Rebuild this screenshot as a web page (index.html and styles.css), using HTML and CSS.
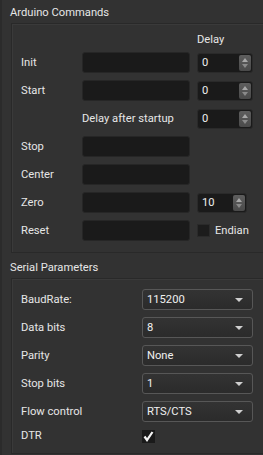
FILE: index.html
```html
<!DOCTYPE html>
<html>
<head>
<meta charset="utf-8">
<link rel="stylesheet" href="styles.css">
</head>
<body>
<div class="page">
  <div class="group-title">Arduino Commands</div>
  <div class="frame">
    <div class="cmd-grid">
      <div></div><div></div><div class="hdr">Delay</div>
      <div class="lbl">Init</div><div class="edit"></div><div class="spin"><span class="val">0</span><span class="btns"><i class="up"></i><i class="dn"></i></span></div>
      <div class="lbl">Start</div><div class="edit"></div><div class="spin"><span class="val">0</span><span class="btns"><i class="up"></i><i class="dn"></i></span></div>
      <div></div><div class="lbl">Delay after startup</div><div class="spin"><span class="val">0</span><span class="btns"><i class="up"></i><i class="dn"></i></span></div>
      <div class="lbl">Stop</div><div class="edit"></div><div></div>
      <div class="lbl">Center</div><div class="edit"></div><div></div>
      <div class="lbl">Zero</div><div class="edit"></div><div class="spin narrow"><span class="val">10</span><span class="btns"><i class="up"></i><i class="dn"></i></span></div>
      <div class="lbl">Reset</div><div class="edit"></div><div class="chk-row"><span class="chk"></span><span class="lbl">Endian</span></div>
    </div>
  </div>
  <div class="group-title second">Serial Parameters</div>
  <div class="frame">
    <div class="ser-grid">
      <div class="lbl">BaudRate:</div><div class="combo"><span>115200</span><i class="arrow"></i></div>
      <div class="lbl">Data bits</div><div class="combo"><span>8</span><i class="arrow"></i></div>
      <div class="lbl">Parity</div><div class="combo"><span>None</span><i class="arrow"></i></div>
      <div class="lbl">Stop bits</div><div class="combo"><span>1</span><i class="arrow"></i></div>
      <div class="lbl">Flow control</div><div class="combo"><span>RTS/CTS</span><i class="arrow"></i></div>
      <div class="lbl">DTR</div><div class="dtr"><span class="chk checked"><svg width="13" height="13" viewBox="0 0 13 13"><path d="M2.5 6.5 L5 10 L10.5 2" fill="none" stroke="#f4f4f4" stroke-width="2.2"/></svg></span></div>
    </div>
  </div>
</div>
</body>
</html>
```
FILE: styles.css
```css
html, body {
  margin: 0;
  padding: 0;
  background: #323232;
}
body {
  font-family: Roboto, "Liberation Sans", Arial, sans-serif;
  font-size: 11.2px;
  color: #e6e6e6;
  width: 263px;
  height: 455px;
  overflow: hidden;
}
.page {
  border-left: 2px solid #2b2b2b;
  padding-left: 8px;
  padding-top: 6px;
  height: 449px;
}
.group-title {
  line-height: 14px;
  height: 14px;
  margin-bottom: 3px;
}
.group-title.second {
  margin-top: 8px;
}
.frame {
  margin-left: 1px;
  border: 1px solid #292929;
  border-right: none;
  box-shadow: inset 1px 1px 0 #3a3a3a;
}
.cmd-grid {
  display: grid;
  grid-template-columns: 54px 108px 56px;
  column-gap: 7px;
  grid-template-rows: 12px repeat(7, 21px);
  row-gap: 7px;
  padding: 9px 0 11px 9px;
}
.cmd-grid > .hdr {
  line-height: 14px;
  height: 12px;
}
.lbl {
  display: flex;
  align-items: center;
  line-height: 14px;
  white-space: nowrap;
}
.edit {
  background: #1a1a1a;
  border: 1px solid #262626;
  border-radius: 3px;
  box-sizing: border-box;
}
.spin {
  height: 20px;
  align-self: center;
  background: #1a1a1a;
  border: 1px solid #2a2a2a;
  border-radius: 3px;
  box-sizing: border-box;
  display: flex;
  align-items: stretch;
}
.spin.narrow {
  width: 50px;
}
.spin .val {
  flex: 1;
  display: flex;
  align-items: center;
  padding-left: 4px;
  color: #f0f0f0;
}
.spin .btns {
  width: 12px;
  margin: 1px;
  background: linear-gradient(#5e5e5e, #4a4a4a);
  border-radius: 2px;
  display: flex;
  flex-direction: column;
  align-items: center;
  justify-content: center;
  gap: 2px;
}
.spin .btns i {
  width: 0;
  height: 0;
  border-left: 3.5px solid transparent;
  border-right: 3.5px solid transparent;
}
.spin .btns .up {
  border-bottom: 4px solid #a8a8a8;
}
.spin .btns .dn {
  border-top: 4px solid #8a8a8a;
}
.chk-row {
  display: flex;
  align-items: center;
  gap: 5px;
}
.chk {
  width: 13px;
  height: 13px;
  box-sizing: border-box;
  background: #1c1c1c;
  border: 1px solid #2a2a2a;
  display: flex;
  align-items: center;
  justify-content: center;
}
.ser-grid {
  display: grid;
  grid-template-columns: 121px 111px;
  grid-template-rows: repeat(5, 21px) 14px;
  row-gap: 7px;
  padding: 10px 0 10px 9px;
}
.combo {
  background: linear-gradient(#333333, #2b2b2b);
  border: 1px solid #575757;
  border-radius: 3px;
  box-sizing: border-box;
  display: flex;
  align-items: center;
  justify-content: space-between;
  padding: 0 9px 0 4px;
  color: #f0f0f0;
}
.combo .arrow {
  width: 0;
  height: 0;
  border-left: 4px solid transparent;
  border-right: 4px solid transparent;
  border-top: 4px solid #cfcfcf;
}
.dtr {
  display: flex;
  align-items: center;
}
.chk.checked {
  background: #1a1a1a;
  border: none;
}
```
